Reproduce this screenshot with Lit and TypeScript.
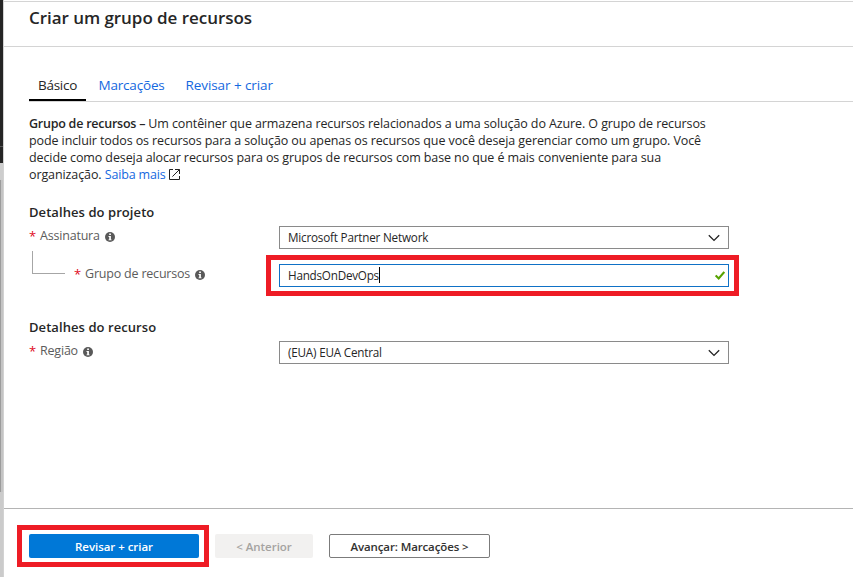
import { LitElement, html, css, nothing } from "lit";

const infoIcon = html`<svg class="info" viewBox="0 0 10 10" width="10" height="10">
  <circle cx="5" cy="5" r="5" fill="#595959" />
  <path d="M4.2 1.6h1.7v1.5H4.2zM3.5 4h2.4v3.4h.7v.9H3.5v-.9h.7V4.9h-.7z" fill="#fff" />
</svg>`;

const chevron = html`<svg class="chevron" viewBox="0 0 12 8" width="12" height="8">
  <path d="M.8 1.2 6 6.4l5.2-5.2" fill="none" stroke="#222" stroke-width="1.3" />
</svg>`;

const check = html`<svg class="check" viewBox="0 0 10 9" width="10" height="9">
  <path d="M.7 4.4 3.7 7.4 9.3 1" fill="none" stroke="#57a300" stroke-width="2.1" />
</svg>`;

const external = html`<svg class="external" viewBox="0 0 11 11" width="11" height="11">
  <path d="M4 .5H.5v10h10V7M6 .5h4.5V5M10.3.7 3.4 7.6" fill="none" stroke="#222" stroke-width="1" />
</svg>`;

class AppRoot extends LitElement {
  static styles = css`
    :host {
      display: flex;
      width: 853px;
      height: 577px;
      overflow: hidden;
      background: #fff;
      color: #262626;
      font: 400 12.5px/17px "Open Sans", "Noto Sans", sans-serif;
      letter-spacing: -0.12px;
    }
    * { box-sizing: border-box; }
    .rail {
      flex: none;
      width: 4px;
      display: flex;
      flex-direction: column;
      border-right: 1px solid #d2d2d2;
    }
    .rail-dark { height: 147px; background: #252525; border-bottom: 1px solid #555; }
    .rail-dark.low { height: 16px; border: 0; }
    .rail-gap { height: 17px; background: #cdcdcd; }
    .rail-bar { height: 312px; background: #c4c4c4; border-left: 1px solid #9c9c9c; }
    .rail-end { flex: 1; background: #cbcbcb; }
    .panel {
      flex: 1;
      min-width: 0;
      display: flex;
      flex-direction: column;
      margin-top: 1px;
      border-top: 1px solid #d4d4d4;
    }
    header {
      height: 45px;
      padding: 4px 0 0 25px;
      border-bottom: 1px solid #d4d4d4;
    }
    h1 {
      margin: 0;
      font-size: 17px;
      line-height: 24px;
      font-weight: 600;
      letter-spacing: -0.05px;
    }
    main { flex: 1; padding: 23px 0 0 25px; }
    .tabs {
      display: flex;
      height: 32px;
      border-bottom: 1px solid #d4d4d4;
      font-size: 13.5px;
      line-height: 30px;
    }
    .tab { color: #1468e0; white-space: nowrap; }
    .tab.active {
      width: 57px;
      height: 31px;
      padding-left: 9px;
      margin-right: 12.5px;
      color: #262626;
      border-bottom: 2px solid #000;
      letter-spacing: -0.28px;
    }
    .tab.tags { width: 87px; letter-spacing: -0.19px; }
    .tab.review { letter-spacing: -0.08px; }
    .intro { margin: 13px 0 0; white-space: nowrap; letter-spacing: -0.1px; }
    .intro b { font-weight: 600; letter-spacing: -0.24px; }
    .intro a { color: #1468e0; letter-spacing: -0.15px; }
    .external { margin-left: 3px; vertical-align: -1px; }
    h2 {
      margin: 0;
      font-size: 13px;
      line-height: 18px;
      font-weight: 600;
      letter-spacing: 0.07px;
    }
    .project { margin-top: 20px; }
    .resource { margin-top: 22px; }
    .row { display: flex; height: 23px; margin-top: 5px; }
    .label {
      display: flex;
      width: 250px;
      height: 19px;
      padding-top: 1px;
      color: #5c5c5c;
      line-height: 18px;
      letter-spacing: -0.2px;
    }
    .star { width: 11px; color: #e00b1c; font-size: 13px; line-height: 18px; }
    .info { margin: 5px 0 0 5px; }
    .field {
      display: flex;
      align-items: center;
      width: 450px;
      height: 23px;
      padding: 0 8px;
      border: 1px solid #8a8a8a;
      background: #fff;
      font-size: 11.7px;
      line-height: 21px;
      letter-spacing: -0.2px;
    }
    .chevron, .check { margin-left: auto; }
    .check { margin-right: -5px; }
    .nested { margin-top: 6px; height: 41px; }
    .nested .label { width: 237px; height: 41px; padding-top: 10px; }
    .elbow {
      width: 33px;
      height: 23px;
      margin: -14px 9px 0 3px;
      border-left: 1px solid #a6a6a6;
      border-bottom: 1px solid #a6a6a6;
    }
    .mark { border: 5px solid #ee1c25; }
    .nested .mark { width: 473px; height: 41px; padding: 4px 5px 4px 8px; }
    .nested .field { border-color: #0f71c6; letter-spacing: -0.23px; }
    .caret { width: 1px; height: 16px; margin-top: -2px; background: #000; }
    footer {
      display: flex;
      height: 69px;
      padding: 16px 0 0 13px;
      border-top: 1px solid #b4b4b4;
    }
    .primary { width: 192px; height: 42px; padding: 4px 5px 4px 7px; }
    button {
      display: block;
      height: 24px;
      padding: 1px 0 0;
      border: 0;
      border-radius: 2px;
      font: 600 11.5px/23px "Open Sans", "Noto Sans", sans-serif;
      letter-spacing: -0.04px;
    }
    .create { width: 170px; background: #0078d7; color: #fff; }
    .prev { width: 98px; margin: 9px 16px 0 6px; background: #f2f1f0; color: #a5a3a1; }
    .next {
      width: 161px;
      margin-top: 9px;
      background: #fff;
      border: 1px solid #7b7b7b;
      color: #323130;
      line-height: 21px;
      letter-spacing: -0.12px;
    }
  `;

  label(text: string, nested = false) {
    return html`<div class="label">
      ${nested ? html`<span class="elbow"></span>` : nothing}
      <span class="star">*</span><span>${text}</span>${infoIcon}
    </div>`;
  }

  render() {
    return html`
      <div class="rail">
        <div class="rail-dark"></div>
        <div class="rail-dark low"></div>
        <div class="rail-gap"></div>
        <div class="rail-bar"></div>
        <div class="rail-end"></div>
      </div>
      <div class="panel">
        <header><h1>Criar um grupo de recursos</h1></header>
        <main>
          <nav class="tabs">
            <span class="tab active">Básico</span>
            <span class="tab tags">Marcações</span>
            <span class="tab review">Revisar + criar</span>
          </nav>
          <p class="intro">
            <b>Grupo de recursos –</b> Um contêiner que armazena recursos relacionados a uma solução do Azure. O grupo de recursos<br />
            pode incluir todos os recursos para a solução ou apenas os recursos que você deseja gerenciar como um grupo. Você<br />
            decide como deseja alocar recursos para os grupos de recursos com base no que é mais conveniente para sua<br />
            organização. <a>Saiba mais</a>${external}
          </p>
          <h2 class="project">Detalhes do projeto</h2>
          <div class="row">
            ${this.label("Assinatura")}
            <div class="field"><span>Microsoft Partner Network</span>${chevron}</div>
          </div>
          <div class="row nested">
            ${this.label("Grupo de recursos", true)}
            <div class="mark">
              <div class="field"><span>HandsOnDevOps</span><span class="caret"></span>${check}</div>
            </div>
          </div>
          <h2 class="resource">Detalhes do recurso</h2>
          <div class="row">
            ${this.label("Região")}
            <div class="field"><span>(EUA) EUA Central</span>${chevron}</div>
          </div>
        </main>
        <footer>
          <div class="mark primary"><button class="create">Revisar + criar</button></div>
          <button class="prev">&lt; Anterior</button>
          <button class="next">Avançar: Marcações &gt;</button>
        </footer>
      </div>
    `;
  }
}
customElements.define("app-root", AppRoot);
